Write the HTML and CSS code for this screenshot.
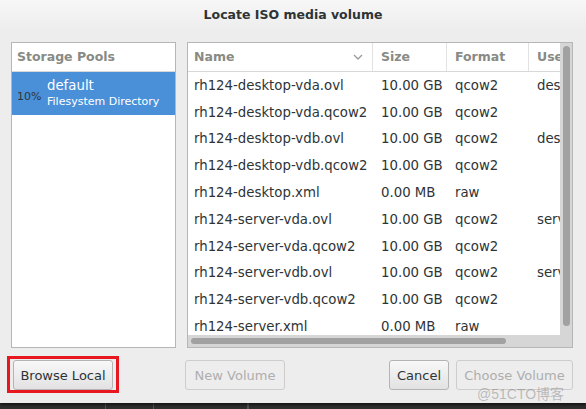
FILE: index.html
```html
<!DOCTYPE html>
<html>
<head>
<meta charset="utf-8">
<link rel="stylesheet" href="styles.css">
</head>
<body>
<div class="screen">
  <div class="dialog">
    <div class="titlebar">Locate ISO media volume</div>
    <div class="content">
      <div class="panes">
        <div class="pools">
          <div class="pools-head">Storage Pools</div>
          <div class="pool selected">
            <span class="pct">10%</span>
            <div class="pool-text">
              <span class="pool-name">default</span>
              <span class="pool-type">Filesystem Directory</span>
            </div>
          </div>
        </div>
        <div class="volumes">
          <div class="vol-main">
            <div class="vol-view">
              <div class="row head">
                <div class="c name">Name<span class="chev"><svg width="10" height="6" viewBox="0 0 10 6"><path d="M1 1 L5 5 L9 1" fill="none" stroke="#9a9a9a" stroke-width="1.3"/></svg></span></div>
                <div class="c size">Size</div>
                <div class="c fmt">Format</div>
                <div class="c use">Used By</div>
              </div>
              <div class="row"><div class="c name">rh124-desktop-vda.ovl</div><div class="c size">10.00 GB</div><div class="c fmt">qcow2</div><div class="c use">desktop</div></div>
              <div class="row"><div class="c name">rh124-desktop-vda.qcow2</div><div class="c size">10.00 GB</div><div class="c fmt">qcow2</div><div class="c use"></div></div>
              <div class="row"><div class="c name">rh124-desktop-vdb.ovl</div><div class="c size">10.00 GB</div><div class="c fmt">qcow2</div><div class="c use">desktop</div></div>
              <div class="row"><div class="c name">rh124-desktop-vdb.qcow2</div><div class="c size">10.00 GB</div><div class="c fmt">qcow2</div><div class="c use"></div></div>
              <div class="row"><div class="c name">rh124-desktop.xml</div><div class="c size">0.00 MB</div><div class="c fmt">raw</div><div class="c use"></div></div>
              <div class="row"><div class="c name">rh124-server-vda.ovl</div><div class="c size">10.00 GB</div><div class="c fmt">qcow2</div><div class="c use">server</div></div>
              <div class="row"><div class="c name">rh124-server-vda.qcow2</div><div class="c size">10.00 GB</div><div class="c fmt">qcow2</div><div class="c use"></div></div>
              <div class="row"><div class="c name">rh124-server-vdb.ovl</div><div class="c size">10.00 GB</div><div class="c fmt">qcow2</div><div class="c use">server</div></div>
              <div class="row"><div class="c name">rh124-server-vdb.qcow2</div><div class="c size">10.00 GB</div><div class="c fmt">qcow2</div><div class="c use"></div></div>
              <div class="row"><div class="c name">rh124-server.xml</div><div class="c size">0.00 MB</div><div class="c fmt">raw</div><div class="c use"></div></div>
            </div>
            <div class="hscroll"><div class="hthumb"></div></div>
          </div>
          <div class="vscroll"><div class="vthumb"></div></div>
        </div>
      </div>
      <div class="buttons">
        <button class="btn browse">Browse Local</button>
        <button class="btn disabled newvol">New Volume</button>
        <div class="spacer"></div>
        <button class="btn cancel">Cancel</button>
        <button class="btn disabled choose">Choose Volume</button>
      </div>
    </div>
    <div class="highlight"></div>
    <div class="watermark">@51CTO博客</div>
  </div>
  <div class="taskbar">
    <div class="tb-seg s1"></div>
    <div class="tb-seg s2"></div>
    <div class="tb-seg s3"></div>
    <div class="tb-seg s4"></div>
  </div>
</div>
</body>
</html>
```

FILE: styles.css
```css
* { box-sizing: border-box; }
html, body { margin: 0; padding: 0; }
body {
  width: 586px;
  height: 409px;
  overflow: hidden;
  font-family: "DejaVu Sans", "Open Sans", sans-serif;
  font-size: 13.3px;
  color: #2e3436;
  background: #3a3a3a;
}
.screen { width: 586px; height: 409px; display: flex; flex-direction: column; }
.dialog {
  position: relative;
  height: 403px;
  background: #ededed;
  display: flex;
  flex-direction: column;
  box-shadow: 0 2px 3px rgba(0,0,0,0.6);
}
.titlebar {
  height: 30px;
  line-height: 30px;
  text-align: center;
  font-weight: bold;
  font-size: 12.5px;
  color: #2e3436;
  background: linear-gradient(#f7f7f7, #ededed);
}
.content {
  padding: 12px 13px 0 11px;
  display: flex;
  flex-direction: column;
}
.panes { display: flex; gap: 11px; height: 306px; }
.pools {
  width: 165px;
  background: #fff;
  border: 1px solid #b6b6b6;
  display: flex;
  flex-direction: column;
}
.pools-head {
  height: 29px;
  line-height: 28px;
  padding-left: 5px;
  color: #888a85;
  font-weight: bold;
  font-size: 12.5px;
  border-bottom: 1px solid #d8d8d8;
}
.pool { display: flex; align-items: center; height: 43px; }
.pool.selected { background: #4a90d9; }
.pct { font-size: 11px; color: #2e3436; width: 35px; padding-left: 5px; padding-top: 6px; }
.pool-text { display: flex; flex-direction: column; color: #fff; }
.pool-name { font-size: 13.3px; line-height: 17px; }
.pool-type { font-size: 11px; line-height: 16px; }
.volumes {
  width: 386px;
  border: 1px solid #b6b6b6;
  background: #d6d6d6;
  display: flex;
}
.vol-main { width: 372px; display: flex; flex-direction: column; }
.vol-view { flex: 1; background: #fff; overflow: hidden; }
.row { display: flex; height: 26.8px; align-items: center; white-space: nowrap; }
.row.head {
  height: 29px;
  border-bottom: 1px solid #d8d8d8;
  color: #888a85;
  font-weight: bold;
  font-size: 12.5px;
}
.c { padding-left: 6px; overflow: hidden; flex: none; }
.name { width: 185px; }
.size { width: 74px; padding-left: 8px; }
.fmt { width: 82px; padding-left: 8px; }
.use { width: 60px; padding-left: 8px; }
.row.head .c { height: 28px; line-height: 28px; }
.row.head .name, .row.head .size, .row.head .fmt { border-right: 1px solid #e2e2e2; }
.row.head .name { display: flex; justify-content: space-between; padding-right: 9px; }
.chev { display: flex; align-items: center; }
.hscroll { height: 12px; background: #d6d6d6; padding: 3px 0 0 3px; }
.hthumb { width: 315px; height: 6px; background: #a1a1a1; border-radius: 3px; }
.vscroll { width: 12px; padding: 3px 0 0 3px; background: #d6d6d6; }
.vthumb { width: 7px; height: 280px; background: #a1a1a1; border-radius: 4px; }
.buttons { display: flex; gap: 7px; margin-top: 12px; height: 30px; padding-left: 2px; }
.spacer { flex: 1; }
.btn {
  font-family: inherit;
  font-size: 13px;
  color: #2e3436;
  height: 30px;
  border: 1px solid #b4b4b4;
  border-radius: 3px;
  background: linear-gradient(#f8f8f8, #e2e2e2);
  padding: 0 2px;
  white-space: nowrap;
}
.btn.disabled {
  color: #aeaeae;
  background: #ededed;
  border-color: #cdcdcd;
}
.browse { width: 100px; }
.newvol { width: 100px; margin-left: 65px; }
.cancel { width: 60px; }
.choose { width: 117px; }
.highlight {
  position: absolute;
  left: 7px;
  top: 356px;
  width: 112px;
  height: 37px;
  border: 3px solid #e8161f;
}
.watermark {
  position: absolute;
  left: 477px;
  top: 383px;
  font-family: "Liberation Sans", "Noto Sans CJK SC", sans-serif;
  font-size: 14px;
  color: rgba(120,120,120,0.45);
}
.taskbar { flex: 1; display: flex; background: #2f2f2f; }
.tb-seg { border-right: 1px solid #555; }
.s1 { width: 106px; }
.s2 { width: 48px; }
.s3 { width: 94px; }
```
